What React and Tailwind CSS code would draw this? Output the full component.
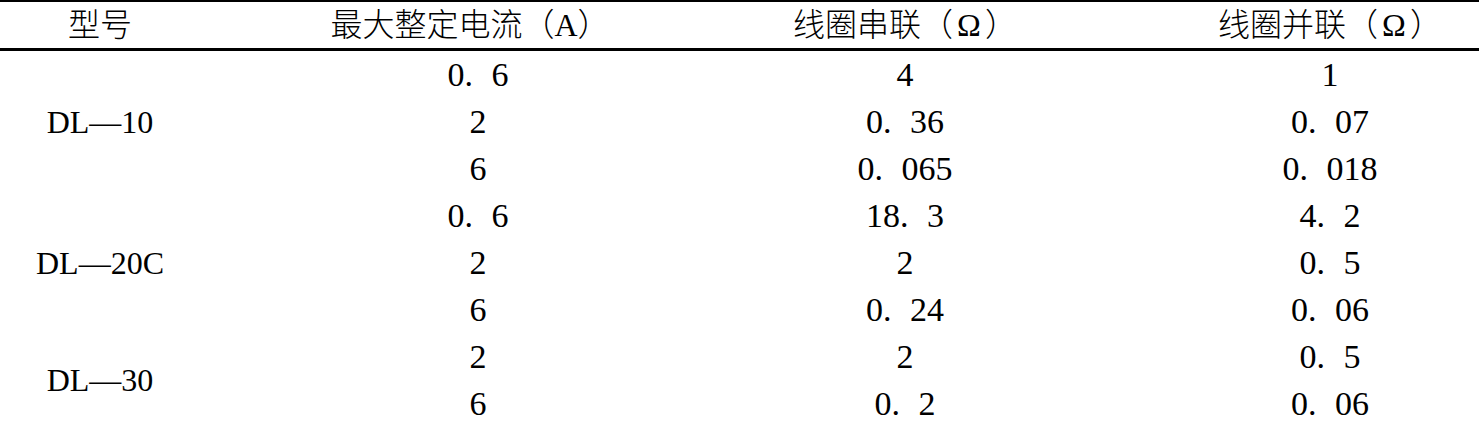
const groups = [
  {
    model: "DL—10",
    rows: [
      ["0. 6", "4", "1"],
      ["2", "0. 36", "0. 07"],
      ["6", "0. 065", "0. 018"],
    ],
  },
  {
    model: "DL—20C",
    rows: [
      ["0. 6", "18. 3", "4. 2"],
      ["2", "2", "0. 5"],
      ["6", "0. 24", "0. 06"],
    ],
  },
  {
    model: "DL—30",
    rows: [
      ["2", "2", "0. 5"],
      ["6", "0. 2", "0. 06"],
    ],
  },
];

const spanClass = { 3: "row-span-3", 2: "row-span-2" };

export default function App() {
  return (
    <div className="w-[1479px] h-[423px] overflow-hidden bg-white text-black font-['Liberation_Serif','Noto_Sans_CJK_SC',serif] text-[32px] leading-none">
      <div className="w-[1606px] border-t-2 border-black">
        <div className="grid grid-cols-[200px_556px_298px_552px] h-[49px] items-center border-b-[3px] border-black font-light">
          <div className="text-center">型号</div>
          <div className="text-center pr-4">最大整定电流（A）</div>
          <div className="text-center">
            线圈串联（<span className="mx-1">Ω</span>）
          </div>
          <div className="text-center">
            线圈并联（<span className="mx-1">Ω</span>）
          </div>
        </div>
        <div className="grid grid-cols-[200px_556px_298px_552px] grid-rows-[repeat(8,47px)]">
          {groups.map((g) => (
            <>
              <div
                key={g.model}
                className={`col-start-1 ${spanClass[g.rows.length]} flex items-center justify-center`}
              >
                {g.model}
              </div>
              {g.rows.map((r, i) =>
                r.map((v, j) => (
                  <div
                    key={g.model + i + "-" + j}
                    className="flex items-center justify-center text-[34px] [word-spacing:10px]"
                  >
                    {v}
                  </div>
                ))
              )}
            </>
          ))}
        </div>
      </div>
    </div>
  );
}
